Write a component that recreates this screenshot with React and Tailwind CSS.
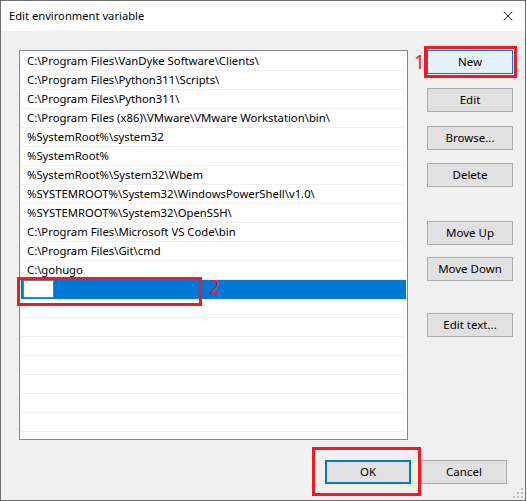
import { X } from 'lucide-react'

const paths = [
  'C:\\Program Files\\VanDyke Software\\Clients\\',
  'C:\\Program Files\\Python311\\Scripts\\',
  'C:\\Program Files\\Python311\\',
  'C:\\Program Files (x86)\\VMware\\VMware Workstation\\bin\\',
  '%SystemRoot%\\system32',
  '%SystemRoot%',
  '%SystemRoot%\\System32\\Wbem',
  '%SYSTEMROOT%\\System32\\WindowsPowerShell\\v1.0\\',
  '%SYSTEMROOT%\\System32\\OpenSSH\\',
  'C:\\Program Files\\Microsoft VS Code\\bin',
  'C:\\Program Files\\Git\\cmd',
  'C:\\gohugo',
]

const WinButton = ({ children, className = '' }) => (
  <button
    className={`w-[86px] h-[24px] border border-[#adadad] bg-[#e1e1e1] text-[11.5px] text-black leading-none ${className}`}
  >
    {children}
  </button>
)

const App = () => {
  const emptyRows = Array.from({ length: 8 })

  return (
    <div className="relative w-[527px] h-[501px] overflow-hidden bg-white">
      <div className="relative w-[526px] h-[501px] border border-[#6e6e6e] bg-[#f0f0f0] font-['Noto_Sans','Open_Sans',sans-serif] text-black">
        {/* Title bar */}
        <div className="h-[30px] bg-white flex items-center justify-between pl-[8px] pr-[9px]">
          <span className="text-[11.2px] pt-px">Edit environment variable</span>
          <X className="w-[16px] h-[16px] text-black" strokeWidth={1.3} />
        </div>

        {/* Body */}
        <div className="flex pl-[18px] pt-[19px]">
          <div className="w-[389px] h-[390px] border border-[#828790] bg-white pt-px overflow-hidden">
            {paths.map((p) => (
              <div key={p} className="h-[19px] mx-px border-b border-[#f0f0f0] pl-[6px] text-[11.3px] leading-[18px] whitespace-nowrap">
                {p}
              </div>
            ))}
            <div className="h-[19px] mx-px bg-[#0078d7] flex items-start">
              <div className="ml-[2px] w-[31px] h-[18px] bg-white border border-[#7a7a7a]" />
            </div>
            {emptyRows.map((_, i) => (
              <div key={i} className="h-[19px] mx-px border-b border-[#f0f0f0]" />
            ))}
          </div>

          <div className="ml-[19px] flex flex-col">
            <WinButton className="!bg-[#e5f1fb] !border-[#0078d7]">New</WinButton>
            <WinButton className="mt-[14px]">Edit</WinButton>
            <WinButton className="mt-[14px]">Browse...</WinButton>
            <WinButton className="mt-[13px]">Delete</WinButton>
            <WinButton className="mt-[34px]">Move Up</WinButton>
            <WinButton className="mt-[12px]">Move Down</WinButton>
            <WinButton className="mt-[32px]">Edit text...</WinButton>
          </div>
        </div>

        {/* Footer */}
        <div className="flex justify-end gap-[10px] pr-[18px] pt-[20px]">
          <WinButton className="!border-2 !border-[#0078d7]">OK</WinButton>
          <WinButton>Cancel</WinButton>
        </div>

        {/* Resize grip */}
        <svg className="absolute right-[2px] bottom-[2px]" width="10" height="10" viewBox="0 0 10 10">
          {[[8, 0], [4, 4], [8, 4], [0, 8], [4, 8], [8, 8]].map(([x, y]) => (
            <rect key={`${x}-${y}`} x={x} y={y} width="2" height="2" fill="#bdbdbd" />
          ))}
        </svg>

        {/* Annotations */}
        <div className="absolute left-[423px] top-[45px] w-[93px] h-[32px] border-[3px] border-[#ed1c24]" />
        <span className="absolute left-[413px] top-[52px] text-[19px] leading-none text-[#ed1c24]">1</span>
        <div className="absolute left-[16px] top-[276px] w-[185px] h-[29px] border-[3px] border-[#ed1c24]" />
        <span className="absolute left-[208px] top-[277px] text-[19px] leading-none text-[#ed1c24]">2</span>
        <div className="absolute left-[311px] top-[446px] w-[109px] h-[49px] border-[3px] border-[#ed1c24]" />
      </div>
    </div>
  )
}

export default App
